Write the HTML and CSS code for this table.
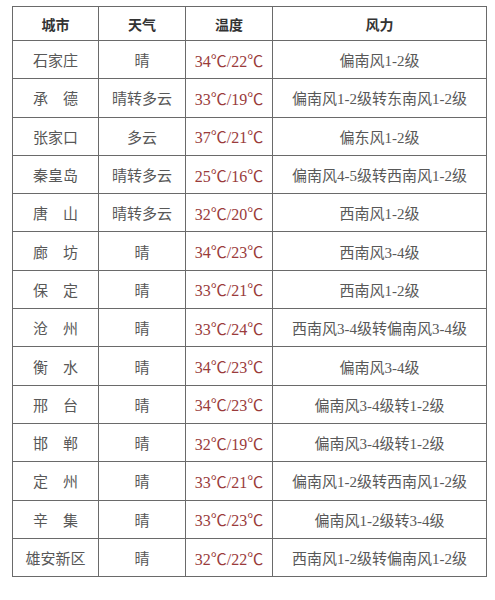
FILE: index.html
```html
<!DOCTYPE html>
<html lang="zh-CN">
<head>
<meta charset="utf-8">
<link rel="stylesheet" href="styles.css">
</head>
<body>
<table class="weather">
  <colgroup><col class="c1"><col class="c2"><col class="c3"><col class="c4"></colgroup>
  <thead>
    <tr><th>城市</th><th>天气</th><th>温度</th><th>风力</th></tr>
  </thead>
  <tbody>
    <tr><td>石家庄</td><td>晴</td><td class="temp">34℃/22℃</td><td>偏南风1-2级</td></tr>
    <tr><td>承　德</td><td>晴转多云</td><td class="temp">33℃/19℃</td><td>偏南风1-2级转东南风1-2级</td></tr>
    <tr><td>张家口</td><td>多云</td><td class="temp">37℃/21℃</td><td>偏东风1-2级</td></tr>
    <tr><td>秦皇岛</td><td>晴转多云</td><td class="temp">25℃/16℃</td><td>偏南风4-5级转西南风1-2级</td></tr>
    <tr><td>唐　山</td><td>晴转多云</td><td class="temp">32℃/20℃</td><td>西南风1-2级</td></tr>
    <tr><td>廊　坊</td><td>晴</td><td class="temp">34℃/23℃</td><td>西南风3-4级</td></tr>
    <tr><td>保　定</td><td>晴</td><td class="temp">33℃/21℃</td><td>西南风1-2级</td></tr>
    <tr><td>沧　州</td><td>晴</td><td class="temp">33℃/24℃</td><td>西南风3-4级转偏南风3-4级</td></tr>
    <tr><td>衡　水</td><td>晴</td><td class="temp">34℃/23℃</td><td>偏南风3-4级</td></tr>
    <tr><td>邢　台</td><td>晴</td><td class="temp">34℃/23℃</td><td>偏南风3-4级转1-2级</td></tr>
    <tr><td>邯　郸</td><td>晴</td><td class="temp">32℃/19℃</td><td>偏南风3-4级转1-2级</td></tr>
    <tr><td>定　州</td><td>晴</td><td class="temp">33℃/21℃</td><td>偏南风1-2级转西南风1-2级</td></tr>
    <tr><td>辛　集</td><td>晴</td><td class="temp">33℃/23℃</td><td>偏南风1-2级转3-4级</td></tr>
    <tr><td>雄安新区</td><td>晴</td><td class="temp">32℃/22℃</td><td>西南风1-2级转偏南风1-2级</td></tr>
  </tbody>
</table>
</body>
</html>
```
FILE: styles.css
```css
html, body {
  margin: 0;
  background: #ffffff;
}
body {
  padding: 6px 0 0 12px;
  font-family: "Liberation Serif", "Noto Sans CJK SC", serif;
  font-size: 15px;
  color: #585858;
}
.weather {
  border-collapse: collapse;
  width: 474px;
  table-layout: fixed;
}
.c1 { width: 86px; }
.c2 { width: 87px; }
.c3 { width: 87px; }
.c4 { width: 214px; }
.weather th,
.weather td {
  border: 1px solid #6a6a6a;
  text-align: center;
  padding: 0;
  white-space: nowrap;
}
.weather th {
  height: 33px;
  font-weight: bold;
  color: #333333;
  font-size: 14px;
}
.weather td {
  height: 37.3px;
}
.temp {
  color: #9a3b3b;
  font-size: 16px;
}
```
